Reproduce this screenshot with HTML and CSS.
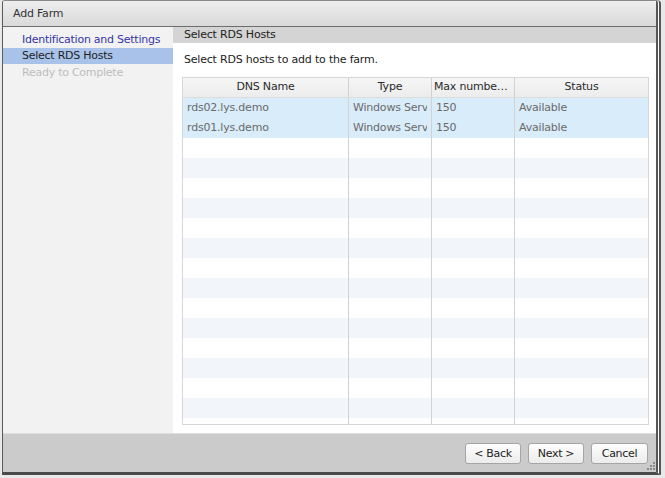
FILE: index.html
```html
<!DOCTYPE html>
<html>
<head>
<meta charset="utf-8">
<link rel="stylesheet" href="styles.css">
</head>
<body>
<div class="window">
  <div class="titlebar">Add Farm</div>
  <div class="main">
    <div class="nav">
      <div class="nav-item done">Identification and Settings</div>
      <div class="nav-item active">Select RDS Hosts</div>
      <div class="nav-item todo">Ready to Complete</div>
    </div>
    <div class="content">
      <div class="content-head">Select RDS Hosts</div>
      <div class="content-body">
        <div class="intro">Select RDS hosts to add to the farm.</div>
        <div class="grid">
          <div class="row head">
            <div class="cell c1">DNS Name</div>
            <div class="cell c2">Type</div>
            <div class="cell c3"><span class="clip">Max number of connections</span></div>
            <div class="cell c4">Status</div>
          </div>
          <div class="rows">
            <div class="row sel"><div class="cell c1">rds02.lys.demo</div><div class="cell c2"><span class="clip">Windows Server</span></div><div class="cell c3">150</div><div class="cell c4">Available</div></div>
            <div class="row sel"><div class="cell c1">rds01.lys.demo</div><div class="cell c2"><span class="clip">Windows Server</span></div><div class="cell c3">150</div><div class="cell c4">Available</div></div>
            <div class="row"><div class="cell c1"></div><div class="cell c2"></div><div class="cell c3"></div><div class="cell c4"></div></div>
            <div class="row alt"><div class="cell c1"></div><div class="cell c2"></div><div class="cell c3"></div><div class="cell c4"></div></div>
            <div class="row"><div class="cell c1"></div><div class="cell c2"></div><div class="cell c3"></div><div class="cell c4"></div></div>
            <div class="row alt"><div class="cell c1"></div><div class="cell c2"></div><div class="cell c3"></div><div class="cell c4"></div></div>
            <div class="row"><div class="cell c1"></div><div class="cell c2"></div><div class="cell c3"></div><div class="cell c4"></div></div>
            <div class="row alt"><div class="cell c1"></div><div class="cell c2"></div><div class="cell c3"></div><div class="cell c4"></div></div>
            <div class="row"><div class="cell c1"></div><div class="cell c2"></div><div class="cell c3"></div><div class="cell c4"></div></div>
            <div class="row alt"><div class="cell c1"></div><div class="cell c2"></div><div class="cell c3"></div><div class="cell c4"></div></div>
            <div class="row"><div class="cell c1"></div><div class="cell c2"></div><div class="cell c3"></div><div class="cell c4"></div></div>
            <div class="row alt"><div class="cell c1"></div><div class="cell c2"></div><div class="cell c3"></div><div class="cell c4"></div></div>
            <div class="row"><div class="cell c1"></div><div class="cell c2"></div><div class="cell c3"></div><div class="cell c4"></div></div>
            <div class="row alt"><div class="cell c1"></div><div class="cell c2"></div><div class="cell c3"></div><div class="cell c4"></div></div>
            <div class="row"><div class="cell c1"></div><div class="cell c2"></div><div class="cell c3"></div><div class="cell c4"></div></div>
            <div class="row alt"><div class="cell c1"></div><div class="cell c2"></div><div class="cell c3"></div><div class="cell c4"></div></div>
            <div class="row"><div class="cell c1"></div><div class="cell c2"></div><div class="cell c3"></div><div class="cell c4"></div></div>
          </div>
        </div>
      </div>
    </div>
  </div>
  <div class="footer">
    <button class="btn">&lt; Back</button>
    <button class="btn">Next &gt;</button>
    <button class="btn wide">Cancel</button>
    <svg class="grip" width="8" height="8" viewBox="0 0 8 8">
      <rect x="6" y="0" width="2" height="2" fill="#8a8a8a"/>
      <rect x="3" y="3" width="2" height="2" fill="#8a8a8a"/>
      <rect x="6" y="3" width="2" height="2" fill="#8a8a8a"/>
      <rect x="0" y="6" width="2" height="2" fill="#8a8a8a"/>
      <rect x="3" y="6" width="2" height="2" fill="#8a8a8a"/>
      <rect x="6" y="6" width="2" height="2" fill="#8a8a8a"/>
    </svg>
  </div>
</div>
</body>
</html>
```

FILE: styles.css
```css
html, body {
  margin: 0;
  padding: 0;
  background: #e9e9e9;
}
body {
  font-family: "DejaVu Sans", Verdana, sans-serif;
  font-size: 11px;
  color: #222;
  width: 665px;
  height: 478px;
  overflow: hidden;
}
.window {
  margin-left: 2px;
  width: 659px;
  height: 475px;
  border: 1px solid #5a5a5a;
  border-top-color: #8a8a8a;
  border-right: 5px double #555;
  border-bottom: 3px solid #4a4a4a;
  border-radius: 3px 4px 0 0;
  display: flex;
  flex-direction: column;
  background: #fff;
  position: relative;
  box-sizing: border-box;
}
.titlebar {
  height: 25px;
  line-height: 25px;
  padding-left: 10px;
  background: linear-gradient(#eeeeee, #d9d9d9);
  border-bottom: 1px solid #6e6e6e;
  color: #333;
  letter-spacing: -0.2px;
  flex: none;
  border-radius: 3px 3px 0 0;
}
.main {
  display: flex;
  height: 406px;
  flex: none;
}
.nav {
  width: 170px;
  background: #f2f2f2;
  padding-top: 4px;
  flex: none;
}
.nav-item {
  height: 17px;
  line-height: 17px;
  padding-left: 19px;
  letter-spacing: -0.25px;
  white-space: nowrap;
}
.nav-item.done { color: #3535a8; }
.nav-item.active { background: #a8c2ea; color: #1e1e1e; height: 16px; line-height: 16px; }
.nav-item.todo { color: #bdbdbd; }
.content {
  flex: 1;
  display: flex;
  flex-direction: column;
  min-width: 0;
}
.content-head {
  height: 17px;
  line-height: 16px;
  background: #d4d4d4;
  padding-left: 11px;
  color: #222;
  letter-spacing: -0.2px;
}
.content-body {
  flex: 1;
  padding: 8px 7px 9px 9px;
  display: flex;
  flex-direction: column;
}
.intro {
  height: 17px;
  line-height: 17px;
  margin-left: 2px;
  letter-spacing: -0.2px;
  color: #222;
}
.grid {
  margin-top: 9px;
  border: 1px solid #d6d6d6;
  height: 348px;
  box-sizing: border-box;
  overflow: hidden;
  display: flex;
  flex-direction: column;
}
.row {
  display: grid;
  grid-template-columns: 166px 83px 83px 1fr;
  height: 20px;
  flex: none;
}
.row.head {
  background: linear-gradient(#f6f6f6, #ececec);
  border-bottom: 1px solid #dddddd;
  height: 19px;
}
.row.head .cell {
  text-align: center;
  color: #2a2a2a;
  line-height: 18px;
  padding: 0 2px;
}
.row.sel { background: #d9ecfa; }
.row.alt { background: #f2f5fa; }
.cell {
  border-right: 1px solid #d2d2d2;
  line-height: 20px;
  padding: 0 4px;
  white-space: nowrap;
  overflow: hidden;
  color: #6a6a6a;
  letter-spacing: -0.2px;
  min-width: 0;
}
.clip {
  display: block;
  overflow: hidden;
  white-space: nowrap;
  text-overflow: clip;
}
.row.head .c3 .clip { text-overflow: ellipsis; text-align: left; }
.cell.c4 { border-right: none; }
.rows {
  flex: 1;
  overflow: hidden;
}
.footer {
  flex: 1;
  background: #cbcbcb;
  border-top: 1px solid #dedede;
  display: flex;
  justify-content: flex-end;
  align-items: flex-start;
  gap: 7px;
  padding: 9px 8px 0 0;
  position: relative;
}
.btn {
  font-family: "DejaVu Sans", Verdana, sans-serif;
  font-size: 11px;
  letter-spacing: -0.3px;
  color: #222;
  height: 21px;
  padding: 0 6px;
  min-width: 56px;
  background: linear-gradient(#fdfdfd, #ececec);
  border: 1px solid #a5a5a5;
  border-radius: 3px;
}
.btn.wide { min-width: 57px; }
.grip {
  position: absolute;
  right: 1px;
  bottom: 2px;
}
```
